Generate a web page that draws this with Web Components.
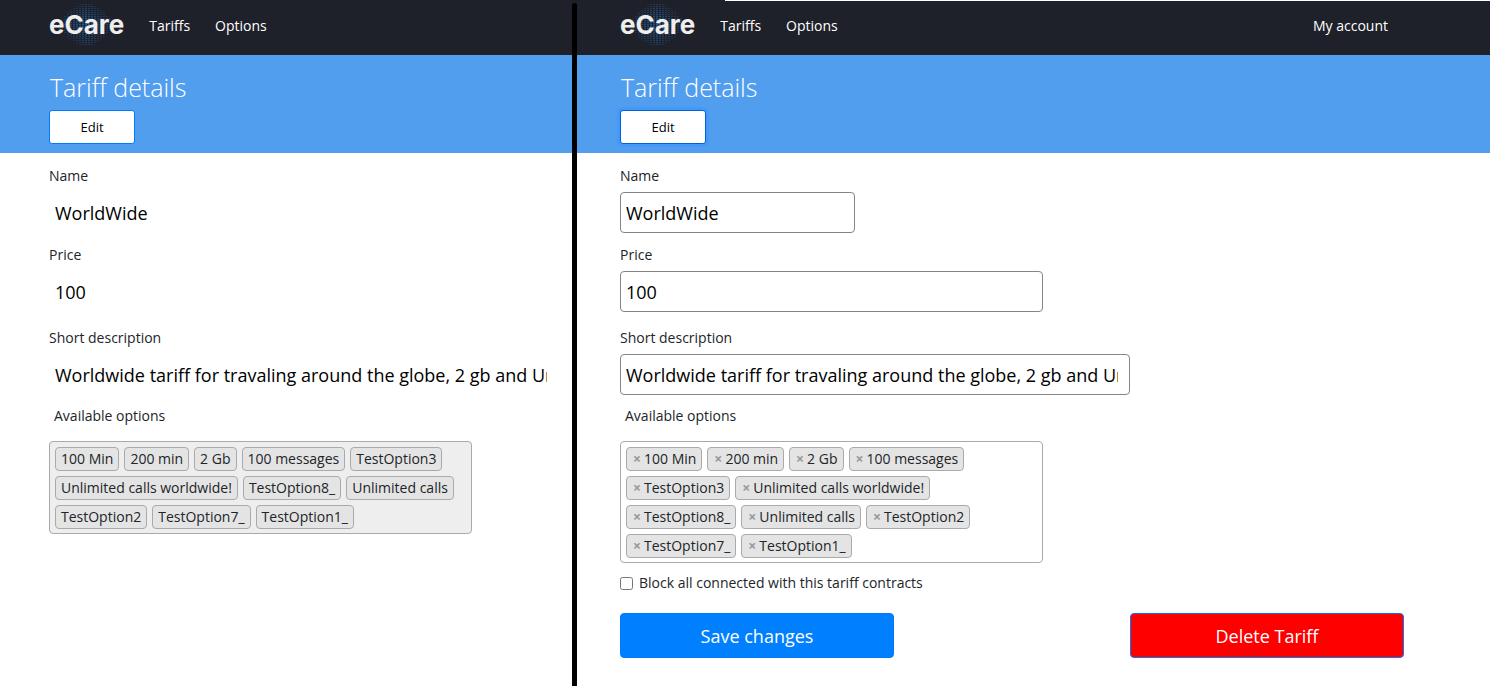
<!DOCTYPE html>
<html lang="en">
<head>
<meta charset="utf-8">
<title>eCare – Tariff details</title>
<style>
  html, body { margin: 0; min-height: 100%; }
  body {
    min-height: 100vh;
    display: flex;
    background: #fff;
    color: #212529;
    font: 400 14px/20px "Open Sans", "Noto Sans", sans-serif;
  }
  ecare-view { flex: 572 1 0; min-width: 0; --gutter: 49px; }
  ecare-view[editing] { flex-grow: 913; --gutter: 43px; --end: 86px; }
</style>
</head>
<body>

<ecare-view>
  <tariff-field label="Name" value="WorldWide" size="small" readonly></tariff-field>
  <tariff-field label="Price" value="100" size="medium" readonly></tariff-field>
  <tariff-field label="Short description" value="Worldwide tariff for travaling around the globe, 2 gb and Unlimited calls worldwide!" size="large" readonly></tariff-field>
  <option-picker disabled>
    <option-chip>100 Min</option-chip><option-chip>200 min</option-chip><option-chip>2 Gb</option-chip>
    <option-chip>100 messages</option-chip><option-chip>TestOption3</option-chip>
    <option-chip>Unlimited calls worldwide!</option-chip><option-chip>TestOption8_</option-chip>
    <option-chip>Unlimited calls</option-chip><option-chip>TestOption2</option-chip>
    <option-chip>TestOption7_</option-chip><option-chip>TestOption1_</option-chip>
  </option-picker>
</ecare-view>

<view-divider></view-divider>

<ecare-view editing>
  <tariff-field label="Name" value="WorldWide" size="small"></tariff-field>
  <tariff-field label="Price" value="100" size="medium"></tariff-field>
  <tariff-field label="Short description" value="Worldwide tariff for travaling around the globe, 2 gb and Unlimited calls worldwide!" size="large"></tariff-field>
  <option-picker>
    <option-chip removable>100 Min</option-chip><option-chip removable>200 min</option-chip>
    <option-chip removable>2 Gb</option-chip><option-chip removable>100 messages</option-chip>
    <option-chip removable>TestOption3</option-chip><option-chip removable>Unlimited calls worldwide!</option-chip>
    <option-chip removable>TestOption8_</option-chip><option-chip removable>Unlimited calls</option-chip>
    <option-chip removable>TestOption2</option-chip><option-chip removable>TestOption7_</option-chip>
    <option-chip removable>TestOption1_</option-chip>
  </option-picker>
  <check-row>Block all connected with this tariff contracts</check-row>
  <tariff-actions></tariff-actions>
</ecare-view>

<script>
const define = (name, render, ready) => customElements.define(name, class extends HTMLElement {
  connectedCallback() {
    if (this.shadowRoot) return;
    this.attachShadow({ mode: "open" }).innerHTML = render(this);
    if (ready) ready(this, this.shadowRoot);
  }
});

/* Rows of small dashes that fade out towards the edge of a globe */
const globeDashes = () => {
  let out = "";
  for (let y = 0; y < 41; y += 2) {
    for (let x = 0; x < 72; x += 3) {
      const d = Math.abs(x - 36) / 32 + Math.abs(y - 20) / 26;
      if (d < 1.04) out += `<rect x="${x}" y="${y}" width="2" height="1" opacity="${Math.max(0.3, 1 - d * 0.7).toFixed(2)}"/><rect x="${x}" y="${y + 1}" width="2" height="1" opacity="${Math.max(0, 0.5 - d * 0.6).toFixed(2)}"/>`;
    }
  }
  return out;
};

define("ecare-logo", () => `
  <style>
    :host { display: block; position: relative; color: #f0eeec; }
    a { position: relative; display: block; color: inherit; text-decoration: none; font: 700 26px/32px Inter, "Open Sans", sans-serif; }
    svg { position: absolute; left: 0; top: -5px; width: 72px; height: 42px; fill: #215a94; }
  </style>
  <svg viewBox="0 0 72 42" aria-hidden="true">${globeDashes()}</svg>
  <a href="#home">eCare</a>`);

define("nav-bar", el => `
  <style>
    :host { display: block; position: relative; background: #1e2129; color: #fff; }
    nav { display: flex; align-items: center; height: 55px; box-sizing: border-box;
          padding: 0 102px 5px var(--gutter); }
    .links { display: flex; gap: 25px; margin-left: 25px; }
    .links a, .account { padding-top: 2px; color: #fff; text-decoration: none; font-weight: 500; white-space: nowrap; }
    .account { margin-left: auto; }
    .edge { position: absolute; top: 0; right: 0; width: calc(100% - 148px); height: 1px; background: #fff; }
  </style>
  <nav>
    <ecare-logo></ecare-logo>
    <div class="links"><a href="#tariffs">Tariffs</a><a href="#options">Options</a></div>
    ${el.hasAttribute("account") ? `<a class="account" href="#account">My account</a>` : ""}
  </nav>
  ${el.hasAttribute("account") ? `<div class="edge"></div>` : ""}`);

define("title-banner", () => `
  <style>
    :host { display: block; background: #519dee; padding: 15px 0 9px var(--gutter); }
    h1 { margin: 0 0 6px 1px; color: #fff; font-size: 25px; line-height: 34px; font-weight: 300; }
    button { display: block; box-sizing: border-box; width: 86px; height: 34px; padding: 0;
             border: 1px solid #007bff; border-radius: 3px; background: #fff; color: #000;
             font: inherit; font-size: 13px; }
    :host([active]) button { border-color: #0062cc; box-shadow: 0 0 0 3px #4398fa; }
  </style>
  <h1>Tariff details</h1>
  <button type="button">Edit</button>`);

define("ecare-view", el => {
  const editing = el.hasAttribute("editing");
  return `
  <style>
    :host { display: block; }
    form { display: flex; flex-direction: column; padding: 13px var(--end, 12px) 28px var(--gutter); }
  </style>
  <nav-bar ${editing ? "account" : ""}></nav-bar>
  <title-banner ${editing ? "active" : ""}></title-banner>
  <form><slot></slot></form>`;
});

define("view-divider", () => `
  <style>
    :host { display: flex; flex: 0 0 5px; padding-top: 3px;
            background: #1e2129; }
    div { flex: 1; background: #000; border-radius: 2px 2px 0 0; }
  </style>
  <div></div>`);

define("tariff-field", el => `
  <style>
    :host { display: block; margin-bottom: 12px; }
    :host([size="medium"]) { margin-bottom: 16px; }
    :host([size="large"]) { margin-bottom: 11px; }
    label { display: block; margin-bottom: 6px; }
    input { display: block; box-sizing: border-box; width: 100%; max-width: 510px; height: 41px;
            padding: 0 11px 0 5px; border: 1px solid #858585; border-radius: 4px;
            background: #fff; color: #000; font: inherit; font-size: 18px; outline: none; }
    :host([size="small"]) input { max-width: 235px; }
    :host([size="medium"]) input { max-width: 423px; }
    :host([readonly]) input { border-color: transparent; }
  </style>
  <label for="field">${el.getAttribute("label")}</label>
  <input id="field" type="text" value="${el.getAttribute("value")}" ${el.hasAttribute("readonly") ? "readonly" : ""}>`);

define("option-picker", () => `
  <style>
    :host { display: block; }
    .label { margin: 0 0 15px 5px; }
    .box { display: flex; flex-wrap: wrap; gap: 5px; box-sizing: border-box; max-width: 423px;
           padding: 5px 5px 4px; border: 1px solid #aaa; border-radius: 4px; background: #fff; }
    :host([disabled]) .box { background: #eee; }
  </style>
  <div class="label" id="caption">Available options</div>
  <div class="box" role="group" aria-labelledby="caption"><slot></slot></div>`);

define("option-chip", el => `
  <style>
    :host { display: flex; align-items: center; box-sizing: border-box; height: 24px; padding: 0 5px;
            border: 1px solid #aaa; border-radius: 4px; background: #e4e4e4; white-space: nowrap; }
    button { width: 10px; margin: 0 2px 0 0; padding: 0; border: 0; background: none; color: #999;
             font: inherit; font-weight: 700; }
  </style>
  ${el.hasAttribute("removable") ? `<button type="button">×</button>` : ""}<span><slot></slot></span>`,
  (el, root) => root.querySelector("button")?.addEventListener("click", () => el.remove()));

define("check-row", () => `
  <style>
    :host { display: flex; align-items: center; margin: 10px 0 20px; }
    input { width: 13px; height: 13px; margin: 0 6px 0 0; }
  </style>
  <input id="block" type="checkbox"><label for="block"><slot></slot></label>`);

define("tariff-actions", () => `
  <style>
    :host { display: flex; justify-content: space-between; gap: 20px; }
    button { flex: 0 1 274px; height: 45px; padding: 0; border: 1px solid #007bff; border-radius: 4px;
             background: #0080ff; color: #fff; font: inherit; font-size: 18px; }
    .delete { background: #f00; }
  </style>
  <button type="submit">Save changes</button>
  <button type="button" class="delete">Delete Tariff</button>`);
</script>
</body>
</html>
